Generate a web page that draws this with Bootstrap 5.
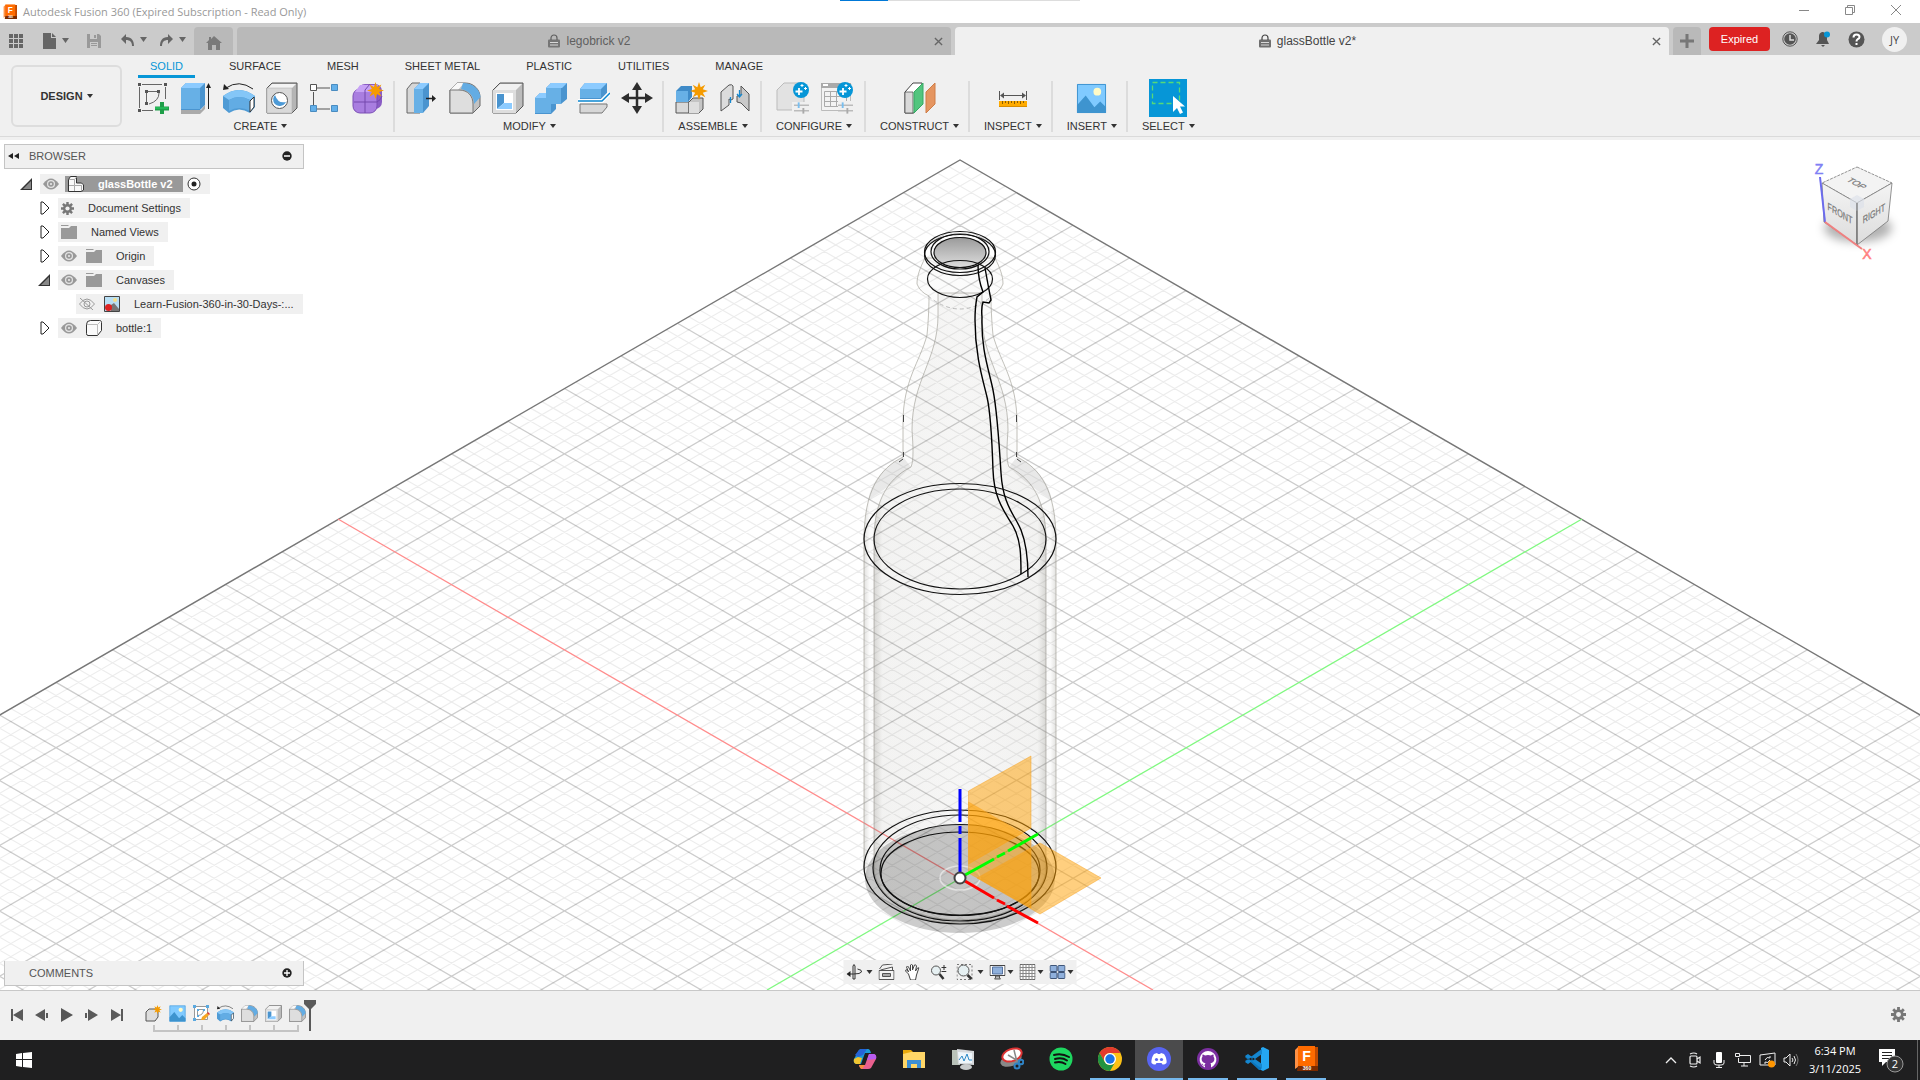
<!DOCTYPE html>
<html lang="en">
<head>
<meta charset="utf-8">
<meta name="viewport" content="width=device-width, initial-scale=1">
<title>Autodesk Fusion 360</title>
<link href="https://cdn.jsdelivr.net/npm/bootstrap@5.3.0/dist/css/bootstrap.min.css" rel="stylesheet">
<style>
:root{--panel:#f0f0f0;--ink:#333;--blue:#0696d7}
body{font:11px/16px "Liberation Sans",Arial,sans-serif;color:var(--ink);background:#fff}
svg{display:block;flex:none}
.plain{border:0;background:none;padding:0;color:inherit;font:inherit;display:flex;align-items:center;justify-content:center}
.titlebar{height:23px;padding:0 1px 0 3px;font:11px/16px "Open Sans","Noto Sans",sans-serif;color:#999;background:#fff}
.titlebar .cap{margin-left:6px}
.titlebar .win{width:46px;height:20px}
.topline{left:840px;top:0;width:240px;height:1px;background:linear-gradient(90deg,#0078d7 48px,#ddd 48px)}
.filebar{height:32px;background:#cbcbcb;color:#5f5f5f;padding-top:4px}
.quick{width:194px;padding-left:9px;color:#666}
.doctab{background:#b9b9b9;border-radius:4px 4px 0 0;height:28px;font-size:12px;color:#5f5f5f}
.doctab.page{flex:1 1 0;padding-left:8px}
.doctab.page .name{gap:6px}
.doctab.current{background:var(--panel);color:#444}
.doctab.home{width:39px}.doctab.plus{width:28px}
.expired{width:61px;height:24px;border-radius:4px;background:#dd2222;color:#fff;font-size:11px;line-height:24px}
.userbar{gap:17px;padding:0 13px 4px 12px}
.who{width:25px;height:25px;border-radius:50%;background:#f0f0f0;color:#444;font:11px/25px "Open Sans",sans-serif;text-align:center}
.ribbon{background:var(--panel);height:85px;padding-bottom:3px}
.ribbon-in{border-bottom:1px solid #dadada;height:82px}
.design{width:111px;height:62px;margin:10px 15px 0 11px;border:2px solid #ddd;border-radius:6px;font-weight:bold}
.ws{gap:22px;padding-left:1px;height:23px}
.ws a{padding:3px 12px 0;height:23px;color:var(--ink);text-decoration:none;line-height:17px}
.ws a.on{color:var(--blue);border-bottom:3px solid var(--blue)}
.tools{margin-left:-11px}
.grp{padding:4px 8px 0 11px;position:relative}
.grp.roomy{padding-right:11px}
.grp+.grp::before{content:"";position:absolute;left:-2px;top:3px;width:2px;height:51px;background:#dcdcdc}
.grp .ic{height:32px;gap:11px}
.grp .lbl{height:16px;margin-top:4px;white-space:nowrap;padding:0 3px}
.caret{width:0;height:0;border:3px solid transparent;border-top:4px solid currentColor;border-bottom:0;margin-left:4px}
.stage{min-height:0;background:#fff;overflow:hidden}
.dock{left:4px;width:300px;background:var(--panel);border:1px solid #c4c4c4;color:#555;padding:0 3px 1px}
.dock.top{top:4px;height:25px}.dock.bottom{bottom:4px;height:25px;border-top:0}
.dock .cap{margin-left:10px}.dock .solo{margin-left:21px}
.tree{left:0;top:34px;margin:0;padding:0;list-style:none}
.tree li{height:20px;margin-bottom:4px;display:flex;align-items:center}
.tree .strip{height:20px;background:var(--panel);display:flex;align-items:center;padding:0 9px 0 3px}
.tree .exp{width:12px;height:14px;margin-right:8px}
.l0{padding-left:20px}.l1{padding-left:38px}.l2{padding-left:56px}
.tree .eye{margin-right:9px}.tree .tx{margin-left:14px}
.picked{height:16px;background:#999;color:#fff;font-weight:bold;padding:0 10px 0 3px;margin-left:-3px}
.navbox{left:50%;transform:translateX(-50%);bottom:6px;height:24px;background:var(--panel);padding:0 3px}
.navbox .caret{margin-left:2px;color:#333}
.navbox .far .caret{margin-left:4px}
.navbox .near{margin-left:6px}.navbox .apart{margin-left:10px}
.timeline{height:50px;background:var(--panel);border-top:1px solid #c8c8c8;padding-left:4px}
.play{width:25px;height:50px;padding-bottom:2px}
.history{margin-left:12px}
.tick{left:0;top:34px}
.tl{width:24px;height:50px;padding-top:14px;align-items:flex-start;position:relative}
.marker{margin-left:-5px}
.tset{margin-right:14px;padding-bottom:2px}
.task{height:40px;background:#1f1f20;color:#fff;font:11px/18px "Open Sans","Noto Sans",sans-serif}
.app{width:40px;height:40px;margin:0 4px 0 5px;border-bottom:2px solid transparent}
.app.open{border-bottom-color:#76b9ed}
.app.front{background:#4b4b4c;width:48px;margin:0 0 0 1px}
.apps{left:840px;top:0}
.start{width:48px}.sys{width:24px}.clock{width:64px}.note{width:34px}.peek{width:3px;border-left:1px solid #666}
</style>
</head>
<body>
<svg width="0" height="0" class="position-absolute" aria-hidden="true">
<defs>
<symbol id="s-star" viewBox="0 0 16 16"><path fill="#f59b00" d="M8 0l1.500 4.600L13.600 2.400 11.400 6.500 16 8l-4.600 1.500 2.200 4.100-4.100-2.200L8 16l-1.500-4.600-4.100 2.200 2.200-4.100L0 8l4.600-1.500L2.400 2.400l4.100 2.200z"/></symbol>
<symbol id="s-fillet" viewBox="0 0 32 32"><path d="M1 8L8 1h8c9 0 15 7 15 14v9l-7 7H1z" fill="#c2c2c2" stroke="#666"/><path d="M1 8h9c9 0 14 6 14 14v9H1z" fill="#dedede"/><path d="M1 8L8 1h7L9 8z" fill="#f8f8f8"/><path d="M14 1c9 0 17 6 17.500 14L25 22C25 14 20 9 12 7z" fill="#63ace3"/><path d="M1 8h9c9 0 14 6 14 14v9H1z" fill="none" stroke="#777"/></symbol>
<symbol id="s-shell" viewBox="0 0 32 32"><path d="M1 8L8 1h23v23l-7 7H1z" fill="#bcbcbc" stroke="#555"/><path d="M2 8L8 2h22l-6 6z" fill="#f1f1f1"/><path d="M1 8h23v23H1z" fill="#dedede"/><path d="M4 11h17v17H4z" fill="#fff"/><path d="M5 12h7v9l-7 6z" fill="#4a94cf"/><path d="M12 21h8v6H5z" fill="#8ccbff"/></symbol>
<symbol id="s-image" viewBox="0 0 32 32"><path d="M1 1h30v30H1z" fill="#80caff"/><circle cx="22" cy="9" r="4" fill="#fffbc7"/><path d="M1 23L10 13l9 12 6-6 6 6v6H1z" fill="#3e94cf"/><path d="M1.500 1.500h29v29h-29z" fill="none" stroke="#3e94cf"/></symbol>
<symbol id="s-revolve" viewBox="0 0 32 32"><path d="M0 14q16-12 32 0v11l-5 6q-11-7-21 0L0 26z" fill="#4f9bd5"/><path d="M0 14q16-12 32 0l-5 4q-11-6-21 0z" fill="#84c6f7"/><path d="M6 18q10-6 21 0v11q-11-6-21 0z" fill="#62ace4"/><path d="M27 19l4-4v10l-4 5z" fill="#fff" stroke="#333"/><path d="M3 6Q16-3 30 7" fill="none" stroke="#222"/><path d="M0 8l1-6 5 5z" fill="#222"/></symbol>
<symbol id="s-eye" viewBox="0 0 16 12"><path d="M0 6Q8-5 16 6 8 17 0 6z" fill="#999"/><circle cx="8" cy="6" r="4" fill="#e5e5e5"/><circle cx="8" cy="6" r="2.800" fill="#999"/><circle cx="8" cy="6" r="1" fill="#eee"/></symbol>
<symbol id="s-folder" viewBox="0 0 16 14"><path d="M0 0h7l1 1H0zM0 3h8l2-2h6v13H0z" fill="#999"/></symbol>
<symbol id="s-gear" viewBox="0 0 16 16"><g fill="#777"><path d="M6.500 0h3v16h-3zM0 6.500h16v3H0z"/><path d="M6.500 0h3v16h-3zM0 6.500h16v3H0z" transform="rotate(45 8 8)"/><circle cx="8" cy="8" r="5.500"/></g><circle cx="8" cy="8" r="2.600" fill="#f0f0f0"/></symbol>
<symbol id="s-closed" viewBox="0 0 12 14"><path d="M3 1v12h2l6-6-6-6z" fill="#fff" stroke="#222"/></symbol>
<symbol id="s-opened" viewBox="0 0 12 14"><path d="M12 1v12H0z" fill="#333"/><path d="M11 4v8H3z" fill="#888"/></symbol>
<symbol id="s-cfg" viewBox="0 0 16 12"><path d="M0 3h16M0 9h16" stroke="#bbb" stroke-width="1.500"/><path d="M5 0v6" stroke="#78bff0" stroke-width="2"/><path d="M10 6v6" stroke="#aaa" stroke-width="2"/></symbol>
<symbol id="s-plusball" viewBox="0 0 16 16"><circle cx="8" cy="8" r="8" fill="#0696d7"/><path d="M6 6v7M2.500 9.500h7" stroke="#fff" stroke-width="1.800"/><path d="M9 2v3M7.500 3.500h3M12.500 5v3M11 6.500h3" stroke="#fff"/></symbol>
<symbol id="s-fusion" viewBox="0 0 24 26"><path d="M4 1h20v20H4z" fill="#c14a00"/><path d="M1 4l3-3v20l-3 2z" fill="#ff9145"/><path d="M4 0h17v20H4z" fill="#ff6b00"/><path d="M4 20h20v5H3z" fill="#7b2b00"/><text x="12.500" y="15" text-anchor="middle" font-family="Liberation Sans" font-weight="bold" font-size="14" fill="#fff">F</text><text x="13" y="24" text-anchor="middle" font-family="Liberation Sans" font-weight="bold" font-size="5" fill="#fff">360</text></symbol>
<symbol id="s-lock" viewBox="0 0 12 14"><path d="M3 6V4a3 3 0 016 0v2" fill="none" stroke="currentColor" stroke-width="1.200"/><rect y="5.500" width="12" height="8" rx="1" fill="currentColor" fill-opacity=".75"/><path d="M2 8.500h8M2 11h8" stroke="#d8d8d8"/></symbol>
<symbol id="s-x" viewBox="0 0 10 10"><path d="M1 1l8 8M9 1L1 9" stroke="#666" stroke-width="1.500"/></symbol>
</defs>
</svg>

<div class="d-flex flex-column vh-100">
<header>
  <div class="titlebar d-flex align-items-start position-relative">
    <svg width="14" height="16" class="mt-1"><use href="#s-fusion"/></svg>
    <span class="cap flex-grow-1 pt-1">Autodesk Fusion 360 (Expired Subscription - Read Only)</span>
    <button class="plain win" aria-label="Minimize"><svg width="10" height="10"><path d="M0 5.500h10" stroke="#888"/></svg></button>
    <button class="plain win" aria-label="Restore"><svg width="10" height="10" fill="none" stroke="#888"><path d="M.5 2.500h7v7h-7zM2.500 2.500v-2h7v7h-2"/></svg></button>
    <button class="plain win" aria-label="Close"><svg width="10" height="10"><path d="M0 0l10 10M10 0L0 10" stroke="#888"/></svg></button>
    <div class="topline position-absolute"></div>
  </div>

  <div class="filebar d-flex">
    <div class="quick d-flex align-items-center">
      <button class="plain" aria-label="Data panel"><svg width="14" height="14" fill="#666"><path d="M0 0h4v4H0zM5 0h4v4H5zM10 0h4v4h-4zM0 5h4v4H0zM5 5h4v4H5zM10 5h4v4h-4zM0 10h4v4H0zM5 10h4v4H5zM10 10h4v4h-4z"/></svg></button>
      <button class="plain ms-3 ps-1" aria-label="File"><svg width="28" height="16" fill="#666"><path d="M0 0h8v5h5v11H0zM9 0l4 4H9zM19 5h7l-3.500 5z"/></svg></button>
      <button class="plain ms-3" aria-label="Save"><svg width="14" height="14"><path d="M0 0h12l2 2v12H0z" fill="#999"/><path d="M3 0h7v5H3zM3 8h8v6H3z" fill="#cbcbcb"/><path d="M7 1h2v3H7zM4 9h6v1H4zM4 11h6v1H4z" fill="#999"/></svg></button>
      <button class="plain ms-3 ps-1" aria-label="Undo"><svg width="27" height="14" fill="#666"><path d="M5 0v3c6 0 8 4 8 9h-2c0-4-2-6-6-6v4L0 5zM19 3h7l-3.500 5z"/></svg></button>
      <button class="plain ms-2 ps-1" aria-label="Redo"><svg width="27" height="14" fill="#666"><path d="M8 0v3C2 3 0 7 0 12h2c0-4 2-6 6-6v4l5-5zM19 3h7l-3.500 5z"/></svg></button>
    </div>
    <button class="plain doctab home me-1" aria-label="Home"><svg width="16" height="14" fill="#7a7a7a" class="mt-1"><path d="M8 0l8 7h-2v7h-4V9H6v5H2V7H0l3-3V1h2v2z"/></svg></button>
    <div class="doctab page d-flex align-items-center me-1">
      <span class="name flex-grow-1 d-flex align-items-center justify-content-center"><svg width="12" height="14"><use href="#s-lock"/></svg>legobrick v2</span>
      <button class="plain me-1 pe-1" aria-label="Close tab"><svg width="9" height="9"><use href="#s-x"/></svg></button>
    </div>
    <div class="doctab page current d-flex align-items-center me-1">
      <span class="name flex-grow-1 d-flex align-items-center justify-content-center"><svg width="12" height="14"><use href="#s-lock"/></svg>glassBottle v2*</span>
      <button class="plain me-1 pe-1" aria-label="Close tab"><svg width="9" height="9"><use href="#s-x"/></svg></button>
    </div>
    <button class="plain doctab plus me-2" aria-label="New tab"><svg width="14" height="14"><path d="M0 7h14M7 0v14" stroke="#777" stroke-width="3"/></svg></button>
    <button class="plain expired">Expired</button>
    <div class="userbar d-flex align-items-center">
      <button class="plain" aria-label="Job status"><svg width="16" height="16"><circle cx="8" cy="8" r="7.200" fill="none" stroke="#555"/><circle cx="8" cy="8" r="5.800" fill="#555"/><path d="M8 4v5h4" fill="none" stroke="#ddd" stroke-width="1.500"/></svg></button>
      <button class="plain" aria-label="Notifications"><svg width="16" height="16"><path d="M1 13l3-4V5q0-3 3-4h1q4 1 4 4v4l2 4zM6 14h4l-2 2z" fill="#555"/><circle cx="12" cy="3.500" r="3" fill="#0696d7"/></svg></button>
      <button class="plain" aria-label="Help"><svg width="17" height="17"><circle cx="8.500" cy="8.500" r="8" fill="#555"/><path d="M5.500 6.500q0-3 3-3t3 2.500q0 1.500-2 2.300-1 .5-1 2.200M8.500 12v2" fill="none" stroke="#fff" stroke-width="2"/></svg></button>
      <button class="plain who" aria-label="Account">JY</button>
    </div>
  </div>

  <div class="ribbon"><div class="ribbon-in d-flex">
    <button class="plain design">DESIGN<span class="caret"></span></button>
    <div class="d-flex flex-column">
      <nav class="ws d-flex">
        <a href="#" class="on">SOLID</a><a href="#">SURFACE</a><a href="#">MESH</a><a href="#">SHEET METAL</a><a href="#">PLASTIC</a><a href="#">UTILITIES</a><a href="#">MANAGE</a>
      </nav>
      <div class="tools d-flex">
        <div class="grp roomy d-flex flex-column align-items-center">
          <div class="ic d-flex align-items-center">
            <button class="plain" aria-label="Create Sketch"><svg width="32" height="32"><g fill="none" stroke="#666"><path d="M5 2.500h20M2.500 5v21M5 28.500h11M28.500 5v12"/><path d="M9.500 11v10M11 9.500h9M22 11q0 8-10 11"/></g><path d="M1 1h3v3H1zM27 1h3v3h-3zM1 27h3v3H1zM8 8h3v3H8zM20 8h3v3h-3zM8 20h3v3H8z" fill="#555"/><path d="M18 26.500h14M25 20v13" stroke="#1e9e48" stroke-width="4"/><path d="M18 26h13" stroke="#23b856" stroke-width="2"/></svg></button>
            <button class="plain" aria-label="Extrude"><svg width="32" height="32"><path d="M1 28h20l4-5v4l-5 5H1z" fill="#aaa"/><path d="M1 6l5-5h19v22l-5 5H1z" fill="#4a94cf"/><path d="M1 6l5-5h19l-5 5z" fill="#8ccbff"/><path d="M1 6h19v21H1z" fill="#67b0e6"/><path d="M28.500 5v22" stroke="#222"/><path d="M26 6l2.500-5L31 6z" fill="#222"/></svg></button>
            <button class="plain" aria-label="Revolve"><svg width="32" height="32"><use href="#s-revolve"/></svg></button>
            <button class="plain" aria-label="Hole"><svg width="32" height="32"><path d="M1 6l5-5h25v25l-5 5H1z" fill="#b5b5b5" stroke="#555"/><path d="M2 6l4-4h24l-4 4z" fill="#f3f3f3"/><path d="M1 6h25v25H1z" fill="#d9d9d9" stroke="#aaa" stroke-width=".5"/><circle cx="13.500" cy="18.500" r="8" fill="#fff" stroke="#555"/><path d="M9 13q-3 3-1 8a7 7 0 0012-1q-8 2-11-7z" fill="#4d9ad6"/></svg></button>
            <button class="plain" aria-label="Pattern"><svg width="32" height="32"><path d="M8 6h13M4.500 10v14M8 27h13" stroke="#555" fill="none"/><path d="M1.500 2.500h6v6h-6z" fill="#fff" stroke="#555"/><path d="M22.500 2.500h6v6h-6zM1.500 23.500h6v6h-6zM22.500 23.500h6v6h-6z" fill="#63b0ea" stroke="#4a8cc0"/></svg></button>
            <button class="plain" aria-label="Create Form"><svg width="32" height="32"><rect x="6" y="2" width="24" height="25" rx="7" fill="#8a5cc4"/><rect x="1" y="7" width="24" height="24" rx="7" fill="#a97ee0" stroke="#7b4fb5"/><path d="M3 10l5-7h18l-3 7z" fill="#c7a2f5"/><path d="M13 8v23M2 20h23q4-2 5-6M13 8l5-6" stroke="#7448ad" fill="none"/><svg x="15" y="0" width="17" height="17"><use href="#s-star"/></svg></svg></button>
          </div>
          <button class="plain lbl">CREATE<span class="caret"></span></button>
        </div>
        <div class="grp roomy d-flex flex-column align-items-center">
          <div class="ic d-flex align-items-center">
            <button class="plain" aria-label="Press Pull"><svg width="32" height="32"><path d="M1 7l5-6h8v30H1z" fill="#d7d7d7" stroke="#666"/><path d="M8 7l6-6h9v23l-6 7H8z" fill="#4a94cf"/><path d="M8 7l6-6h9l-6 6z" fill="#8ccbff"/><path d="M8 7h9v24H8z" fill="#67b0e6"/><path d="M20 16.500h7" stroke="#222" stroke-width="1.500"/><path d="M26 13l4 3.500-4 3.500z" fill="#222"/></svg></button>
            <button class="plain" aria-label="Fillet"><svg width="32" height="32"><use href="#s-fillet"/></svg></button>
            <button class="plain" aria-label="Shell"><svg width="32" height="32"><use href="#s-shell"/></svg></button>
            <button class="plain" aria-label="Combine"><svg width="32" height="32"><path d="M0 16l5-5h6V6l5-5h16v16l-6 5h-5v5l-5 5H0z" fill="#4a94cf"/><path d="M0 16l5-5h6V6l5-5h16l-5 5H15l-3 5 3 0-4 5z" fill="#8ccbff"/><path d="M0 16h11V6h15v16h-5v0h-5v9H0z" fill="#67b0e6"/></svg></button>
            <button class="plain" aria-label="Offset Face"><svg width="32" height="32"><path d="M2 7l5-6h22v10l-6 6H2z" fill="#4a94cf"/><path d="M2 7l5-6h22l-6 6z" fill="#8ccbff"/><path d="M2 7h21v9H2z" fill="#67b0e6"/><path d="M2 22h27v3l-5 6H2z" fill="#d7d7d7" stroke="#777"/><path d="M0 19h24l8-8" stroke="#fff" stroke-width="4" fill="none"/><path d="M0 19h24l8-8" stroke="#0b86d0" stroke-width="1.500" fill="none"/></svg></button>
            <button class="plain" aria-label="Move"><svg width="32" height="32"><path d="M16 4v24M4 16h24" stroke="#2d2d2d" stroke-width="2.500"/><path d="M16 0l5 8H11zM16 32l5-8H11zM0 16l8-5v10zM32 16l-8-5v10z" fill="#2d2d2d"/></svg></button>
          </div>
          <button class="plain lbl">MODIFY<span class="caret"></span></button>
        </div>
        <div class="grp roomy d-flex flex-column align-items-center">
          <div class="ic d-flex align-items-center">
            <button class="plain" aria-label="New Component"><svg width="33" height="32"><path d="M1 20h13v11H1z" fill="#d9d9d9" stroke="#555"/><path d="M14 20l4-4h10v11l-4 4H14z" fill="#c4c4c4" stroke="#555"/><path d="M14 20h10v11H14z" fill="#dedede"/><path d="M1 9l5-5h11v11l-4 5H1z" fill="#3f8bc8"/><path d="M1 9h12v11H1z" fill="#67b0e6"/><svg x="15" y="0" width="18" height="18"><use href="#s-star"/></svg></svg></button>
            <button class="plain" aria-label="Joint"><svg width="32" height="32"><path d="M2 10l8-7q3-1 4 1v13q-2 2-4 0v6l-8 6z" fill="#dcdcdc" stroke="#555"/><path d="M18 14l4-1V4l8 8v17l-8-8-4-1z" fill="#c9c9c9" stroke="#555"/><path d="M11.500 15v6M20.500 8v6M18 12l2.500 3 2.500-3" stroke="#1689d0" fill="none" stroke-width="1.300"/></svg></button>
          </div>
          <button class="plain lbl">ASSEMBLE<span class="caret"></span></button>
        </div>
        <div class="grp roomy d-flex flex-column align-items-center">
          <div class="ic d-flex align-items-center">
            <button class="plain" aria-label="Configure model"><svg width="33" height="32"><path d="M1 8l7-7h20v23l-4 4H1z" fill="#e2e2e2" stroke="#bbb"/><path d="M16 20h17v12H16z" fill="#f0f0f0"/><svg x="17" y="0" width="16" height="16"><use href="#s-plusball"/></svg><svg x="18" y="20" width="15" height="12"><use href="#s-cfg"/></svg></svg></button>
            <button class="plain" aria-label="Configuration table"><svg width="33" height="32"><path d="M1.500 1.500h29v27h-29z" fill="#f3f3f3" stroke="#bbb"/><path d="M1 1h30v5H1z" fill="#aaa"/><path d="M3 2h5v2H3z" fill="#fff"/><path d="M4.500 9.500h22v15h-22zM4.500 14.500h22M4.500 19.500h22M10.500 9v15M16.500 9v15" fill="none" stroke="#aaa"/><path d="M18 19h15v13H18z" fill="#f0f0f0"/><svg x="17" y="0" width="16" height="16"><use href="#s-plusball"/></svg><svg x="18" y="20" width="15" height="12"><use href="#s-cfg"/></svg></svg></button>
          </div>
          <button class="plain lbl">CONFIGURE<span class="caret"></span></button>
        </div>
        <div class="grp d-flex flex-column align-items-center">
          <div class="ic d-flex align-items-center">
            <button class="plain" aria-label="Offset Plane"><svg width="32" height="32"><path d="M1 10l8-9h9v21l-8 9H1z" fill="#fff" stroke="#444"/><path d="M1 10h8v21H1z" fill="#d9d9d9" stroke="#444" stroke-width=".7"/><path d="M10 10l9-9v21l-9 9z" fill="#52c57e" stroke="#35a862"/><path d="M22 10l9-9v21l-9 9z" fill="#e59560" stroke="#cf7d47"/></svg></button>
          </div>
          <button class="plain lbl">CONSTRUCT<span class="caret"></span></button>
        </div>
        <div class="grp d-flex flex-column align-items-center">
          <div class="ic d-flex align-items-center">
            <button class="plain" aria-label="Measure"><svg width="28" height="32"><path d="M.5 9v9M27.500 9v9M3 13.500h22" stroke="#555"/><path d="M1 13.500l4-3v6zM27 13.500l-4-3v6z" fill="#555"/><path d="M0 19h28v6H0z" fill="#ffab00"/><path d="M0 24h28v1H0z" fill="#d98d00"/><path d="M3.500 19v3M6.500 19v2M9.500 19v3M12.500 19v2M15.500 19v3M18.500 19v2M21.500 19v3M24.500 19v2" stroke="#8a5c00"/></svg></button>
          </div>
          <button class="plain lbl">INSPECT<span class="caret"></span></button>
        </div>
        <div class="grp d-flex flex-column align-items-center">
          <div class="ic d-flex align-items-center">
            <button class="plain" aria-label="Insert image"><svg width="31" height="31"><use href="#s-image"/></svg></button>
          </div>
          <button class="plain lbl">INSERT<span class="caret"></span></button>
        </div>
        <div class="grp d-flex flex-column align-items-center">
          <div class="ic d-flex align-items-center">
            <button class="plain" aria-label="Select"><svg width="38" height="38"><path d="M0 0h38v38H0z" fill="#0696d7"/><path d="M3.500 3.500h27v21h-27z" fill="none" stroke="#57d977" stroke-dasharray="5 3" stroke-width="1.300"/><path d="M24 17v16l4-4 3 6 3-1.500-3-6h5z" fill="#fff"/></svg></button>
          </div>
          <button class="plain lbl">SELECT<span class="caret"></span></button>
        </div>
      </div>
    </div>
  </div></div>
</header>

<main class="stage flex-grow-1 position-relative">
  <svg class="position-absolute w-100 h-100" viewBox="0 140 1920 850" preserveAspectRatio="xMidYMid slice">
    <defs>
      <clipPath id="plane"><path d="M960 160L2500 1050H-580z"/></clipPath>
      <linearGradient id="outerglass"><stop stop-color="#77756c" stop-opacity=".22"/><stop offset=".03" stop-color="#8c8a80" stop-opacity=".03"/><stop offset=".97" stop-color="#8c8a80" stop-opacity=".03"/><stop offset="1" stop-color="#77756c" stop-opacity=".22"/></linearGradient>
      <linearGradient id="innerglass"><stop stop-color="#77756c" stop-opacity=".28"/><stop offset=".05" stop-color="#8c8a80" stop-opacity=".08"/><stop offset=".5" stop-color="#8c8a80" stop-opacity=".05"/><stop offset=".95" stop-color="#8c8a80" stop-opacity=".08"/><stop offset="1" stop-color="#77756c" stop-opacity=".28"/></linearGradient>
      <linearGradient id="mouth" x2="0" y2="1"><stop stop-color="#999"/><stop offset="1" stop-color="#ddd"/></linearGradient>
      <linearGradient id="cubeface" x2="0" y2="1"><stop stop-color="#f4f4f4"/><stop offset="1" stop-color="#dcdcdc"/></linearGradient>
      <filter id="soft" x="-50%" y="-50%" width="200%" height="200%"><feGaussianBlur stdDeviation="5"/></filter>
    </defs>
    <g clip-path="url(#plane)" fill="none">
      <path id="minor" stroke="#000" stroke-opacity=".075" stroke-width="1.200"/>
      <path id="major" stroke="#000" stroke-opacity=".2" stroke-width="1.300"/>
    </g>
    <path d="M-40 738L960 160l1000 578" fill="none" stroke="#777" stroke-width="1.400"/>
    <path d="M338 519l815 471" stroke="#ff8c8c" stroke-width="1.300"/><path d="M1582 519L767 990" stroke="#80f880" stroke-width="1.300"/>

    <!-- glass walls -->
    <path fill="url(#outerglass)" stroke="#a8a69e" stroke-opacity=".7" d="M925 258C920 268 917 276 917 284q3 8 12 12C929 310 928 325 927 335C920 362 903 380 903 423V457C880 468 864 490 864 540V867a96 56 0 00192 0V540C1056 490 1040 468 1017 457V423C1017 380 1000 362 993 335C992 325 991 310 991 296q9-4 12-12c0-8-3-16-8-26z"/>
    <path fill="url(#innerglass)" stroke="#99978f" stroke-opacity=".6" d="M938 293V315C938 360 912 380 912 430C913 445 914 460 911 467C885 480 874 505 874 540V868a86 52 0 00172 0V540C1046 505 1035 480 1009 467C1006 460 1007 445 1008 430C1008 380 982 360 982 315V293z"/>
    <path d="M903 457C885 466 872 480 868 500q25-15 43-33zM1017 457c18 9 31 23 35 43q-25-15-43-33z" fill="#777" fill-opacity=".14"/>
    <path d="M903.500 415v7M903.500 452v5M1016.500 415v7M1016.500 452v5M899 462l4-3M1021 462l-4-3" stroke="#444"/>
    <path d="M928 296q32 26 64 0" fill="none" stroke="#bbb" stroke-dasharray="4 3"/>
    <ellipse cx="960" cy="879" rx="95" ry="54" fill="#000" fill-opacity=".2"/>
    <ellipse cx="960" cy="252" rx="26" ry="15" fill="url(#mouth)"/>
    <g fill="none" stroke="#111" stroke-width="1.200">
      <ellipse cx="960" cy="252" rx="35.500" ry="20.500"/><ellipse cx="960" cy="255" rx="35.500" ry="20.500"/>
      <ellipse cx="960" cy="251.500" rx="29" ry="17.500"/><ellipse cx="960" cy="252.500" rx="26" ry="15"/>
      <ellipse cx="960" cy="279" rx="32.500" ry="18.500"/>
      <ellipse cx="960" cy="539" rx="96" ry="55.500"/><ellipse cx="960" cy="539" rx="86" ry="50"/>
      <ellipse cx="960" cy="867" rx="96" ry="57"/><ellipse cx="960" cy="868" rx="87" ry="53"/>
      <ellipse cx="960" cy="870" rx="80" ry="45.500"/><ellipse cx="960" cy="873.500" rx="79" ry="41.500"/>
    </g>
    <g fill="none" stroke="#000" stroke-width="1.400">
      <path d="M978 265q0 14 5 27l-6 5q-2 10-2 23C975 355 983 380 987 397S992 440 993 470c1 30 12 42 20 56s8 30 8 48"/>
      <path d="M985 268q3 17 6 32l-2 3-6-1q-2 6-1 15C981 350 989 370 993 390S999 440 1001 473c2 33 14 42 20 57s7 30 7 47"/>
    </g>
    <ellipse cx="960" cy="878" rx="20" ry="12" fill="none" stroke="#fff" stroke-opacity=".5" stroke-width="1.500"/>
    <g fill="#ffa000" fill-opacity=".5" stroke="#f5a52a" stroke-opacity=".5">
      <path d="M968.500 791l62.500-35v72l-62.500 36z"/><path d="M968.500 802l62.500 36v70l-62.500-35z"/><path d="M1040 843l61 35-61 36-63-36z"/>
    </g>
    <g stroke-width="3">
      <path d="M960 789v33M960 826v8M960 838v36" stroke="#00f"/>
      <path d="M965 875l29-16M997 857l8-4M1008 851l30-17" stroke="#0f0"/>
      <path d="M965 881l29 17M997 900l8 4M1007 906l31 17" stroke="#f00"/>
    </g>
    <circle cx="960" cy="878" r="5.500" fill="#fff" stroke="#444" stroke-width="2"/>

    <!-- view cube -->
    <ellipse cx="1858" cy="228" rx="34" ry="14" fill="#000" fill-opacity=".3" filter="url(#soft)"/>
    <g stroke="#777" stroke-width=".8">
      <path d="M1857 167l35 16-35 20-35-20z" fill="#f3f3f3" stroke-dasharray="3 1"/>
      <path d="M1822 183l35 20v42l-33-23z" fill="url(#cubeface)"/><path d="M1892 183l-35 20v42l31-24z" fill="url(#cubeface)"/>
    </g>
    <path d="M1850 199l7-4 7 4v8l-7 4-7-4z" fill="#dde1ea" fill-opacity=".7"/><path d="M1857 203v42" stroke="#666"/>
    <path d="M1820 177l5 45" stroke="#6b6bee" stroke-width="2"/><path d="M1825 222l37 27" stroke="#f08080" stroke-width="2"/>
    <g font-family="Liberation Sans" font-size="9" fill="#777" stroke="#777" stroke-width=".2" text-anchor="middle">
      <text transform="matrix(.8 .48 0 1.150 1840 217)">FRONT</text>
      <text transform="matrix(.8 -.48 0 1.150 1874 217)">RIGHT</text>
      <text transform="matrix(.9 .5 -.9 .5 1854 185)">TOP</text>
    </g>
    <g font-family="Liberation Sans" font-size="14" text-anchor="middle" stroke-width=".5"><text x="1819" y="174" fill="#8080f4" stroke="#8080f4">Z</text><text x="1867" y="259" fill="#ff8080" stroke="#ff8080">X</text></g>
  </svg>

  <div class="dock top position-absolute d-flex align-items-center">
    <button class="plain" aria-label="Collapse"><svg width="11" height="6" fill="#222"><path d="M5 0v6L0 3zM11 0v6L6 3z"/></svg></button>
    <span class="cap flex-grow-1">BROWSER</span>
    <button class="plain me-2" aria-label="Hide"><svg width="10" height="10"><circle cx="5" cy="5" r="4.700" fill="#222"/><path d="M2 5h6" stroke="#fff" stroke-width="1.500"/></svg></button>
  </div>
  <ul class="tree position-absolute">
    <li class="l0"><button class="plain exp" aria-label="Collapse"><svg width="12" height="14"><use href="#s-opened"/></svg></button><div class="strip"><svg class="eye" width="16" height="12"><use href="#s-eye"/></svg><span class="picked d-flex align-items-center"><svg width="16" height="16"><path d="M.5 3.500l2-3h6V7h5l2 2v5l-2 1.500H.5z" fill="#fafafa" stroke="#333"/><path d="M1 3.500h5.500V9M6.500 3.500L8.500 1M1 9.500h5.500V15M6.500 9.500h7V15M13.500 9.500L15 8" fill="none" stroke="#aaa"/></svg><span class="tx">glassBottle v2</span></span><svg width="14" height="14" class="ms-1"><circle cx="7" cy="7" r="6" fill="#fff" stroke="#333"/><circle cx="7" cy="7" r="2.500" fill="#222"/></svg></div></li>
    <li class="l1"><button class="plain exp" aria-label="Expand"><svg width="12" height="14"><use href="#s-closed"/></svg></button><div class="strip"><svg width="13" height="13"><use href="#s-gear"/></svg><span class="tx">Document Settings</span></div></li>
    <li class="l1"><button class="plain exp" aria-label="Expand"><svg width="12" height="14"><use href="#s-closed"/></svg></button><div class="strip"><svg width="16" height="14"><use href="#s-folder"/></svg><span class="tx">Named Views</span></div></li>
    <li class="l1"><button class="plain exp" aria-label="Expand"><svg width="12" height="14"><use href="#s-closed"/></svg></button><div class="strip"><svg class="eye" width="16" height="12"><use href="#s-eye"/></svg><svg width="16" height="14"><use href="#s-folder"/></svg><span class="tx">Origin</span></div></li>
    <li class="l1"><button class="plain exp" aria-label="Collapse"><svg width="12" height="14"><use href="#s-opened"/></svg></button><div class="strip"><svg class="eye" width="16" height="12"><use href="#s-eye"/></svg><svg width="16" height="14"><use href="#s-folder"/></svg><span class="tx">Canvases</span></div></li>
    <li class="l2"><span class="exp"></span><div class="strip"><svg class="eye" width="16" height="12" fill="none" stroke="#999"><path d="M.5 6Q8-4 15.500 6 8 16 .5 6zM1 0l13 12"/><circle cx="8" cy="6" r="3"/></svg><svg width="16" height="16"><path d="M.5.5h15v15H.5z" fill="#b8dff5" stroke="#444"/><path d="M7 15V9l3-2 5 6v2z" fill="#777"/><circle cx="11" cy="4" r="2" fill="#f5e08c"/><circle cx="4.500" cy="11.500" r="3.500" fill="#d22"/></svg><span class="tx">Learn-Fusion-360-in-30-Days-:...</span></div></li>
    <li class="l1"><button class="plain exp" aria-label="Expand"><svg width="12" height="14"><use href="#s-closed"/></svg></button><div class="strip"><svg class="eye" width="16" height="12"><use href="#s-eye"/></svg><svg width="16" height="16"><path d="M.5 4.500q0-4 4-4h9q2 0 2 2v8l-4 5H2q-1.500 0-1.500-2z" fill="#fafafa" stroke="#333"/><path d="M1 4.500h10.500V15M11.500 4.500L15 1" fill="none" stroke="#bbb"/></svg><span class="tx">bottle:1</span></div></li>
  </ul>
  <div class="dock bottom position-absolute d-flex align-items-center">
    <span class="cap solo flex-grow-1">COMMENTS</span>
    <button class="plain me-2" aria-label="Show comments"><svg width="10" height="10"><circle cx="5" cy="5" r="4.700" fill="#222"/><path d="M2 5h6M5 2v6" stroke="#fff" stroke-width="1.300"/></svg></button>
  </div>
  <div class="navbox position-absolute d-flex align-items-center">
    <button class="plain far" aria-label="Orbit"><svg width="16" height="16" fill="none" stroke="#333"><path d="M6.500 15V2l1-1.500L8.500 2v13z"/><path d="M11 5q5 1 4 3t-8 2H2"/><path d="M4 7l-4 3 4 3z" fill="#222" stroke="none"/></svg><span class="caret"></span></button>
    <button class="plain near" aria-label="Look At"><svg width="16" height="16" fill="#f4f4f4" stroke="#555"><path d="M.5 6.500h15v9H.5zM1 5l3-4 10-1M2 6l12-3v3"/><path d="M4 9.500h8v3H4z" fill="#aaa"/></svg></button>
    <button class="plain apart" aria-label="Pan"><svg width="16" height="16" fill="#fff" stroke="#444"><path d="M4 10L1 7Q1 5 3 6l1 2-2-5q1-2 2 0l2 4V1q1-1 2 0v5l2-5q1-1 2 1l-1 5 2-3q2-1 1 1l-2 6-1 5H6z"/></svg></button>
    <button class="plain apart" aria-label="Zoom"><svg width="16" height="16"><circle cx="5.500" cy="6.500" r="4.500" fill="#e6f0f2" stroke="#555"/><path d="M9 10l4 5" stroke="#333" stroke-width="2.500"/><path d="M11 3.500h5M13.500 1v5M11 7.500h5" stroke="#333"/></svg></button>
    <button class="plain apart far" aria-label="Fit"><svg width="17" height="16"><path d="M.5.500h15v15H.5z" fill="none" stroke="#777" stroke-dasharray="2 2"/><circle cx="7" cy="6.500" r="5.500" fill="#e6f0f2" stroke="#555"/><path d="M11 11l4 4" stroke="#333" stroke-width="2.500"/></svg><span class="caret"></span></button>
    <button class="plain near" aria-label="Display Settings"><svg width="16" height="16"><path d="M.5 1.500h15v10H.5z" fill="#fff" stroke="#444"/><path d="M3 3h10v7H3z" fill="#8fb0dc" stroke="#5572a0"/><path d="M6 12h4v2l1 1H5l1-1z" fill="#bbb" stroke="#555"/></svg><span class="caret"></span></button>
    <button class="plain near" aria-label="Grid and Snaps"><svg width="16" height="16" fill="none" stroke="#666"><path fill="#fff" d="M.5.500h15v15H.5z"/><path d="M3.500 0v16M6.500 0v16M9.500 0v16M12.500 0v16M0 3.500h16M0 6.500h16M0 9.500h16M0 12.500h16" stroke="#888"/></svg><span class="caret"></span></button>
    <button class="plain near" aria-label="Viewports"><svg width="16" height="14" fill="#8fb0dc" stroke="#3e5578"><rect x=".5" y=".5" width="7" height="6" rx="1"/><rect x="8.500" y=".5" width="7" height="6" rx="1"/><rect x=".5" y="7.500" width="7" height="6" rx="1"/><rect x="8.500" y="7.500" width="7" height="6" rx="1"/></svg><span class="caret"></span></button>
  </div>
</main>

<section class="timeline d-flex align-items-center">
  <button class="plain play" aria-label="Go to start"><svg width="12" height="12" fill="#5a5a5a"><path d="M0 0h2v12H0zM12 0v12L2 6z"/></svg></button>
  <button class="plain play" aria-label="Step back"><svg width="13" height="12" fill="#5a5a5a"><path d="M10 0v12L0 6zM11 4h2v5h-2z"/></svg></button>
  <button class="plain play" aria-label="Play"><svg width="12" height="14" fill="#555"><path d="M0 0l12 7-12 7z"/></svg></button>
  <button class="plain play" aria-label="Step forward"><svg width="13" height="12" fill="#5a5a5a"><path d="M3 0v12l10-6zM0 4h2v5H0z"/></svg></button>
  <button class="plain play" aria-label="Go to end"><svg width="12" height="12" fill="#5a5a5a"><path d="M10 0h2v12h-2zM0 0v12l10-6z"/></svg></button>
  <div class="history d-flex position-relative">
    <svg class="tick position-absolute" width="190" height="8"><path d="M13 0v6h144V0M37 0v6M61 0v6M85 0v6M109 0v6M133 0v6" fill="none" stroke="#c4c4c4" stroke-width="2"/></svg>
    <button class="plain tl" aria-label="Component"><svg width="17" height="17"><path d="M1 7l3-3h9v8l-3 4H1z" fill="#ddd" stroke="#555"/><svg x="8" y="0" width="9" height="9"><use href="#s-star"/></svg></svg></button>
    <button class="plain tl" aria-label="Canvas"><svg width="17" height="17"><use href="#s-image"/></svg></button>
    <button class="plain tl" aria-label="Sketch"><svg width="17" height="17"><path d="M1.500 1.500h13v13h-13zM4.500 4.500h6q0 6-6 6z" fill="#fff" stroke="#999"/><path d="M0 0h3v3H0zM13 0h3v3h-3zM0 13h3v3H0zM4 4h2v2H4zM10 4h2v2h-2zM4 10h2v2H4z" fill="#5aa9e0"/><path d="M8 15l1-3 5-4 2 2-5 5z" fill="#f5a623"/><path d="M14 8l1-1 2 2-1 1z" fill="#d33"/></svg></button>
    <button class="plain tl" aria-label="Revolve"><svg width="17" height="17"><use href="#s-revolve"/></svg></button>
    <button class="plain tl" aria-label="Fillet"><svg width="17" height="17"><use href="#s-fillet"/></svg></button>
    <button class="plain tl" aria-label="Shell"><svg width="17" height="17"><use href="#s-shell"/></svg></button>
    <button class="plain tl" aria-label="Fillet"><svg width="17" height="17"><use href="#s-fillet"/></svg></button>
    <svg width="12" height="32" class="marker mt-2"><path d="M0 1h12v4L7 10v22H5V10L0 5z" fill="#5a5a5a"/></svg>
  </div>
  <button class="plain ms-auto tset" aria-label="Timeline settings"><svg width="15" height="15"><use href="#s-gear"/></svg></button>
</section>

<footer class="task d-flex position-relative">
  <button class="plain start" aria-label="Start"><svg width="16" height="16" fill="#fff"><path d="M0 2l6-1v6H0zM7 1l9-1v7H7zM0 8h6v7l-6-1zM7 8h9v8l-9-1z"/></svg></button>
  <div class="apps position-absolute d-flex">
    <button class="plain app" aria-label="Copilot"><svg width="24" height="24"><path d="M6 3Q7 2 9 2h6q2 0 3 4H12L8 17H3q-3-1-2-5z" fill="#1b9ad8"/><path d="M6 3Q7 2 9 2h5L10 8 5 10 2 8z" fill="#2564d8"/><path d="M1 12l4-2 4 1-2 6H3q-3-1-2-5z" fill="#f0c530"/><path d="M18 21q-1 1-3 1H9q-2 0-3-4h6l4-11h5q3 1 2 5z" fill="#e9608f"/><path d="M16 7h5q3 1 2 5l-9 1z" fill="#b75cf0"/><path d="M6 18h6l-3 4q-2 0-3-4z" fill="#f78d3c"/></svg></button>
    <button class="plain app" aria-label="File Explorer"><svg width="24" height="24"><path d="M1 3h8l2 2h12v16H1z" fill="#e8a80c"/><path d="M1 7l8-2h14v16H1z" fill="#ffd667"/><path d="M5 21v-8h14v8h-4v-4H9v4z" fill="#3d8fd4"/></svg></button>
    <button class="plain app" aria-label="Performance Monitor"><svg width="24" height="24"><path d="M1 3h8v15H1z" fill="#b9c2b9"/><path d="M6 2l17 2v14l-16-1z" fill="#d6d9dc"/><path d="M7 5l14 1v10H8z" fill="#eef6fb"/><path d="M8 13l3-4 2 5 3-7 2 6h3" fill="none" stroke="#2d8ac8"/><ellipse cx="15" cy="20" rx="6" ry="3" fill="#c8cbcc"/></svg></button>
    <button class="plain app" aria-label="Snipping Tool"><svg width="24" height="24"><ellipse cx="11" cy="13" rx="11" ry="6" fill="#888" transform="rotate(-20 11 13)"/><ellipse cx="12" cy="8" rx="10" ry="6" fill="#fff" stroke="#d33" stroke-width="2" transform="rotate(-20 12 8)"/><path d="M14 3l3 12M8 8l12 7" stroke="#888" stroke-width="1.500"/><circle cx="17" cy="19" r="2.500" fill="none" stroke="#2f83c5" stroke-width="2"/><circle cx="21" cy="15" r="2.300" fill="none" stroke="#2f83c5" stroke-width="2"/></svg></button>
    <button class="plain app" aria-label="Spotify"><svg width="24" height="24"><circle cx="12" cy="12" r="11.500" fill="#1ed760"/><path d="M5 8q8-2 15 2M6 12q7-2 12 1.500M6 15.500q6-1.500 10.500 1.500" fill="none" stroke="#111" stroke-width="2" stroke-linecap="round"/></svg></button>
    <button class="plain app open" aria-label="Chrome"><svg width="24" height="24"><circle cx="12" cy="12" r="12" fill="#fbc116"/><path d="M1.600 6A12 12 0 0122.400 6H12a6 6 0 00-5.200 9z" fill="#e33b2e"/><path d="M1.600 6A12 12 0 0012 24l5.200-9a6 6 0 01-10.400 0z" fill="#229342"/><circle cx="12" cy="12" r="6" fill="#fff"/><circle cx="12" cy="12" r="4.700" fill="#1a73e8"/></svg></button>
    <button class="plain app open front" aria-label="Discord"><svg width="24" height="24"><circle cx="12" cy="12" r="12" fill="#5865f2"/><path d="M7 7l3-1 1 1h2l1-1 3 1q3 4 2.500 9-2 2-4 1.500l-1-1.500h-5l-1 1.500q-2 .5-4-1.500Q4 11 7 7z" fill="#fff"/><circle cx="9.500" cy="12.500" r="1.600" fill="#5865f2"/><circle cx="14.500" cy="12.500" r="1.600" fill="#5865f2"/></svg></button>
    <button class="plain app open" aria-label="GitHub Desktop"><svg width="24" height="24"><circle cx="12" cy="12" r="11" fill="#7b2fa0"/><path d="M12 4a8.500 8.500 0 00-3 16.400v-2q-3 .5-3.500-2 1 0 1.500 1t2 .2q0-1 .6-1.400-4-.6-4-4.200 0-1.300.9-2.300-.4-1.200.1-2.300 1.200 0 2.400 1 3-.8 6 0 1.200-1 2.400-1 .5 1.200.1 2.300.9 1 .9 2.300 0 3.600-4 4.200.6.600.6 1.800v2.400A8.500 8.500 0 0012 4z" fill="#fff"/></svg></button>
    <button class="plain app open" aria-label="Visual Studio Code"><svg width="24" height="24"><path d="M18 1L5 14l-3 2-2-2 18-13zM18 23L5 10 2 8l-2 2 14 13z" fill="#0b76bd"/><path d="M18 0l6 3v18l-6 3-2-1V1z" fill="#25a7f2"/><path d="M17 2v5L3 17l-3-2zM17 22v-5L3 7 0 9z" fill="#1687cf"/></svg></button>
    <button class="plain app open" aria-label="Fusion 360"><svg width="24" height="26"><use href="#s-fusion"/></svg></button>
  </div>
  <div class="ms-auto d-flex align-items-center">
    <button class="plain sys" aria-label="Show hidden icons"><svg width="12" height="7" fill="none" stroke="#eee" stroke-width="1.300"><path d="M1 6l5-5 5 5"/></svg></button>
    <button class="plain sys" aria-label="Meet now"><svg width="12" height="16" fill="none" stroke="#eee" stroke-width="1.200"><rect x="1" y="4" width="7" height="8" rx="1"/><path d="M8 7l3-2v6L8 9M1 2q4-2 7 0M1 14q4 2 7 0"/></svg></button>
    <button class="plain sys" aria-label="Microphone"><svg width="12" height="16"><rect x="3" width="6" height="11" rx="1" fill="#fff"/><path d="M1 8v3q0 2 3 2h4q3 0 3-2V8M6 13v3M3 15.500h6" fill="none" stroke="#eee"/></svg></button>
    <button class="plain sys" aria-label="Network"><svg width="16" height="14" fill="none" stroke="#eee"><path d="M4 2.500h11.500v7H3.500V5M.5.500h4v3h-4zM9 10v3M6 13h7"/></svg></button>
    <button class="plain sys" aria-label="Windows Update"><svg width="17" height="16" fill="none" stroke="#eee"><path d="M1 3l15-2v12H1zM6 8q2-4 5-2V4M11 8q-2 4-5 2v2"/><circle cx="12.500" cy="12" r="3.500" fill="#ff9500" stroke="none"/></svg></button>
    <button class="plain sys" aria-label="Volume"><svg width="16" height="14" fill="none" stroke="#eee"><path d="M1 5h2l4-4v12L3 9H1zM9 5q2 2 0 4M11 3q3 4 0 8"/><path d="M13 1q4 6 0 12" stroke="#777"/></svg></button>
    <div class="clock text-center"><div>6:34 PM</div><div>3/11/2025</div></div>
    <button class="plain note ms-2" aria-label="Notifications"><svg width="28" height="26"><path d="M1 2h16v13H8l-4 4v-4H1z" fill="#fff"/><path d="M4 5.500h10M4 8.500h10M4 11.500h7" stroke="#222"/><circle cx="17" cy="17" r="8" fill="#333" stroke="#999"/><text x="17" y="21" text-anchor="middle" fill="#fff" font-size="11">2</text></svg></button>
    <div class="peek h-100 ms-2"></div>
  </div>
</footer>
</div>

<script src="https://cdn.jsdelivr.net/npm/bootstrap@5.3.0/dist/js/bootstrap.bundle.min.js"></script>
<script>
// Isometric ground grid: one major cell spans 56.5 x 32.65, divided in five.
const dx = 56.5, dy = 32.65, far = 28;
let minor = '', major = '';
for (let i = 1; i < far * 5; i++) {
  const k = i / 5;
  const seg = `M${960 - k * dx} ${160 + k * dy}l${far * dx} ${far * dy}M${960 + k * dx} ${160 + k * dy}l${-far * dx} ${far * dy}`;
  if (i % 5) minor += seg; else if (k !== 11) major += seg;
}
document.getElementById('minor').setAttribute('d', minor);
document.getElementById('major').setAttribute('d', major);
</script>
</body>
</html>
